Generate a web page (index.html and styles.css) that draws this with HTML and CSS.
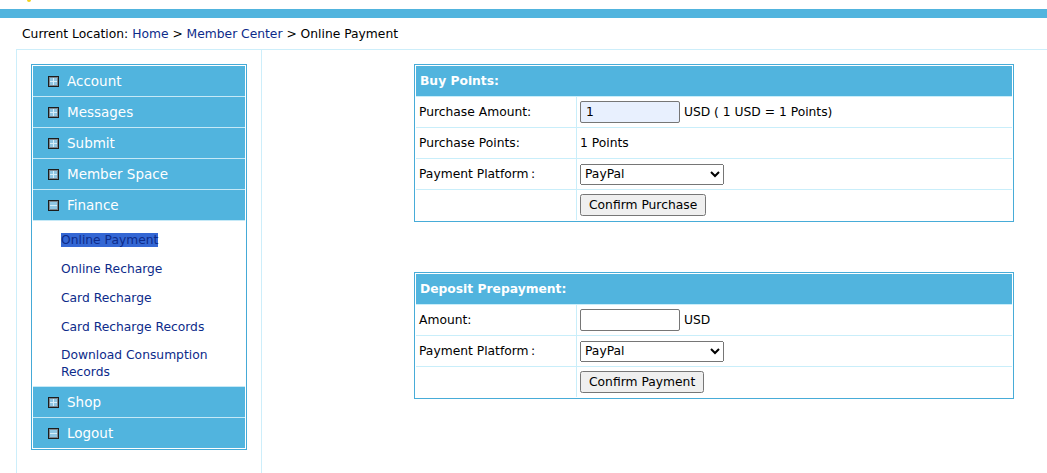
FILE: index.html
```html
<!DOCTYPE html>
<html lang="en">
<head>
    <meta charset="UTF-8">
    <title>Online Payment</title>
    <link rel="stylesheet" href="styles.css">
</head>
<body>

    <div class="top"><span class="logo-dot"></span></div>
    <div class="topbar"></div>

    <div class="crumb">
        Current Location: <a href="#">Home</a> &gt; <a href="#">Member Center</a> &gt; Online Payment
    </div>

    <div class="main">
        <div class="side">
            <ul class="menu">
                <li class="head">
                    <svg class="ico" width="11" height="11" viewBox="0 0 11 11"><rect x=".5" y=".5" width="10" height="10" fill="#8fc6e4" stroke="#1c1c1c"/><rect x="1.5" y="1.5" width="8" height="8" fill="none" stroke="#7d8790"/><path d="M5.5 2v7M2 5.5h7" stroke="#d6eef9"/></svg>Account
                </li>
                <li class="head">
                    <svg class="ico" width="11" height="11" viewBox="0 0 11 11"><rect x=".5" y=".5" width="10" height="10" fill="#8fc6e4" stroke="#1c1c1c"/><rect x="1.5" y="1.5" width="8" height="8" fill="none" stroke="#7d8790"/><path d="M5.5 2v7M2 5.5h7" stroke="#d6eef9"/></svg>Messages
                </li>
                <li class="head">
                    <svg class="ico" width="11" height="11" viewBox="0 0 11 11"><rect x=".5" y=".5" width="10" height="10" fill="#8fc6e4" stroke="#1c1c1c"/><rect x="1.5" y="1.5" width="8" height="8" fill="none" stroke="#7d8790"/><path d="M5.5 2v7M2 5.5h7" stroke="#d6eef9"/></svg>Submit
                </li>
                <li class="head">
                    <svg class="ico" width="11" height="11" viewBox="0 0 11 11"><rect x=".5" y=".5" width="10" height="10" fill="#8fc6e4" stroke="#1c1c1c"/><rect x="1.5" y="1.5" width="8" height="8" fill="none" stroke="#7d8790"/><path d="M5.5 2v7M2 5.5h7" stroke="#d6eef9"/></svg>Member Space
                </li>
                <li class="head">
                    <svg class="ico" width="11" height="11" viewBox="0 0 11 11"><rect x=".5" y=".5" width="10" height="10" fill="#8fc6e4" stroke="#1c1c1c"/><rect x="1.5" y="1.5" width="8" height="8" fill="none" stroke="#7d8790"/><path d="M2 5.5h7" stroke="#d6eef9"/></svg>Finance
                </li>
                <li class="sub">
                    <ul>
                        <li><a href="#" class="cur">Online Payment</a></li>
                        <li><a href="#">Online Recharge</a></li>
                        <li><a href="#">Card Recharge</a></li>
                        <li><a href="#">Card Recharge Records</a></li>
                        <li><a href="#">Download Consumption Records</a></li>
                    </ul>
                </li>
                <li class="head">
                    <svg class="ico" width="11" height="11" viewBox="0 0 11 11"><rect x=".5" y=".5" width="10" height="10" fill="#8fc6e4" stroke="#1c1c1c"/><rect x="1.5" y="1.5" width="8" height="8" fill="none" stroke="#7d8790"/><path d="M5.5 2v7M2 5.5h7" stroke="#d6eef9"/></svg>Shop
                </li>
                <li class="head last">
                    <svg class="ico" width="11" height="11" viewBox="0 0 11 11"><rect x=".5" y=".5" width="10" height="10" fill="#8fc6e4" stroke="#1c1c1c"/><rect x="1.5" y="1.5" width="8" height="8" fill="none" stroke="#7d8790"/><path d="M2 5.5h7" stroke="#d6eef9"/></svg>Logout
                </li>
            </ul>
        </div>

        <div class="content">
            <table class="pay">
                <tr>
                    <th colspan="2">Buy Points:</th>
                </tr>
                <tr>
                    <td class="label">Purchase Amount:</td>
                    <td><input type="text" class="amount filled" value="1"> USD ( 1 USD = 1 Points)</td>
                </tr>
                <tr>
                    <td class="label">Purchase Points:</td>
                    <td>1 Points</td>
                </tr>
                <tr>
                    <td class="label">Payment Platform&thinsp;:</td>
                    <td>
                        <select class="platform">
                            <option>PayPal</option>
                        </select>
                    </td>
                </tr>
                <tr class="last">
                    <td class="label"></td>
                    <td><button class="btn">Confirm Purchase</button></td>
                </tr>
            </table>

            <table class="pay second">
                <tr>
                    <th colspan="2">Deposit Prepayment:</th>
                </tr>
                <tr>
                    <td class="label">Amount:</td>
                    <td><input type="text" class="amount"> USD</td>
                </tr>
                <tr>
                    <td class="label">Payment Platform&thinsp;:</td>
                    <td>
                        <select class="platform">
                            <option>PayPal</option>
                        </select>
                    </td>
                </tr>
                <tr class="last">
                    <td class="label"></td>
                    <td><button class="btn">Confirm Payment</button></td>
                </tr>
            </table>
        </div>
    </div>

</body>
</html>
```

FILE: styles.css
```css
*{
    margin:0;
    padding:0;
}

ul{
    list-style: none;
}

body{
    font-family: "DejaVu Sans", sans-serif;
    font-size: 12.3px;
    color: #000;
    background: #fff;
}

a{
    color: #0d2b8a;
    text-decoration: none;
}

.top{
    position: relative;
    height: 9px;
    overflow: hidden;
}

.logo-dot{
    position: absolute;
    left: 27px;
    top: -2px;
    width: 4px;
    height: 4px;
    border-radius: 50%;
    background: #f2d11c;
}

.topbar{
    height: 9px;
    background: #51b4de;
}

.crumb{
    height: 29px;
    padding: 2px 0 0 22px;
    line-height: 29px;
}

.main{
    display: flex;
    min-height: 440px;
    margin-left: 16px;
    border-top: 1px solid #cdeefa;
    border-left: 1px solid #cdeefa;
}

.side{
    width: 216px;
    padding: 14px 14px 0;
    border-right: 1px solid #cdeefa;
}

.menu{
    padding: 1px;
    border: 1px solid #45aad7;
    background: #fff;
}

.menu .head{
    display: flex;
    align-items: center;
    height: 30px;
    padding-left: 15px;
    border-bottom: 1px solid #c5e9f7;
    background: #51b4de;
    color: #fff;
    font-size: 13.5px;
}

.menu .last{
    border-bottom: none;
}

.menu .ico{
    margin-right: 8px;
    flex: none;
}

.menu .sub{
    height: 166px;
    padding: 5px 0 0 28px;
    box-sizing: border-box;
    border-bottom: 1px solid #c5e9f7;
}

.menu .sub li{
    padding: 6px 0 5.85px;
    line-height: 17px;
}

.menu .sub li:last-child{
    padding: 5.2px 0 0;
}

.menu .sub .cur{
    background: #3467d4;
}

.content{
    flex: 1;
    padding: 14px 0 0 152px;
}

.pay{
    width: 600px;
    padding: 1px;
    border: 1px solid #48acd8;
    border-spacing: 0;
}

.pay.second{
    margin-top: 50px;
}

.pay th{
    height: 30px;
    padding: 0 4px;
    border-bottom: 1px solid #c9eefa;
    background: #51b4de;
    color: #fff;
    font-weight: bold;
    text-align: left;
}

.pay td{
    height: 30px;
    padding: 0 3px;
    border-bottom: 1px solid #c9eefa;
    white-space: nowrap;
}

.pay .last td{
    border-bottom: none;
}

.pay td.label{
    width: 154px;
    border-right: 1px solid #c9eefa;
}

.amount{
    width: 100px;
    height: 22px;
    padding: 1px 5px;
    box-sizing: border-box;
    border: 1px solid #767676;
    border-radius: 2px;
    font-family: "DejaVu Sans", sans-serif;
    font-size: 12.3px;
    vertical-align: middle;
}

.amount.filled{
    background: #e8f0fe;
}

.platform{
    width: 144px;
    height: 21px;
    font-family: "DejaVu Sans", sans-serif;
    font-size: 12.3px;
    vertical-align: middle;
}

.btn{
    height: 22px;
    padding: 0 7px;
    font-family: "DejaVu Sans", sans-serif;
    font-size: 12.3px;
    vertical-align: middle;
}
```
